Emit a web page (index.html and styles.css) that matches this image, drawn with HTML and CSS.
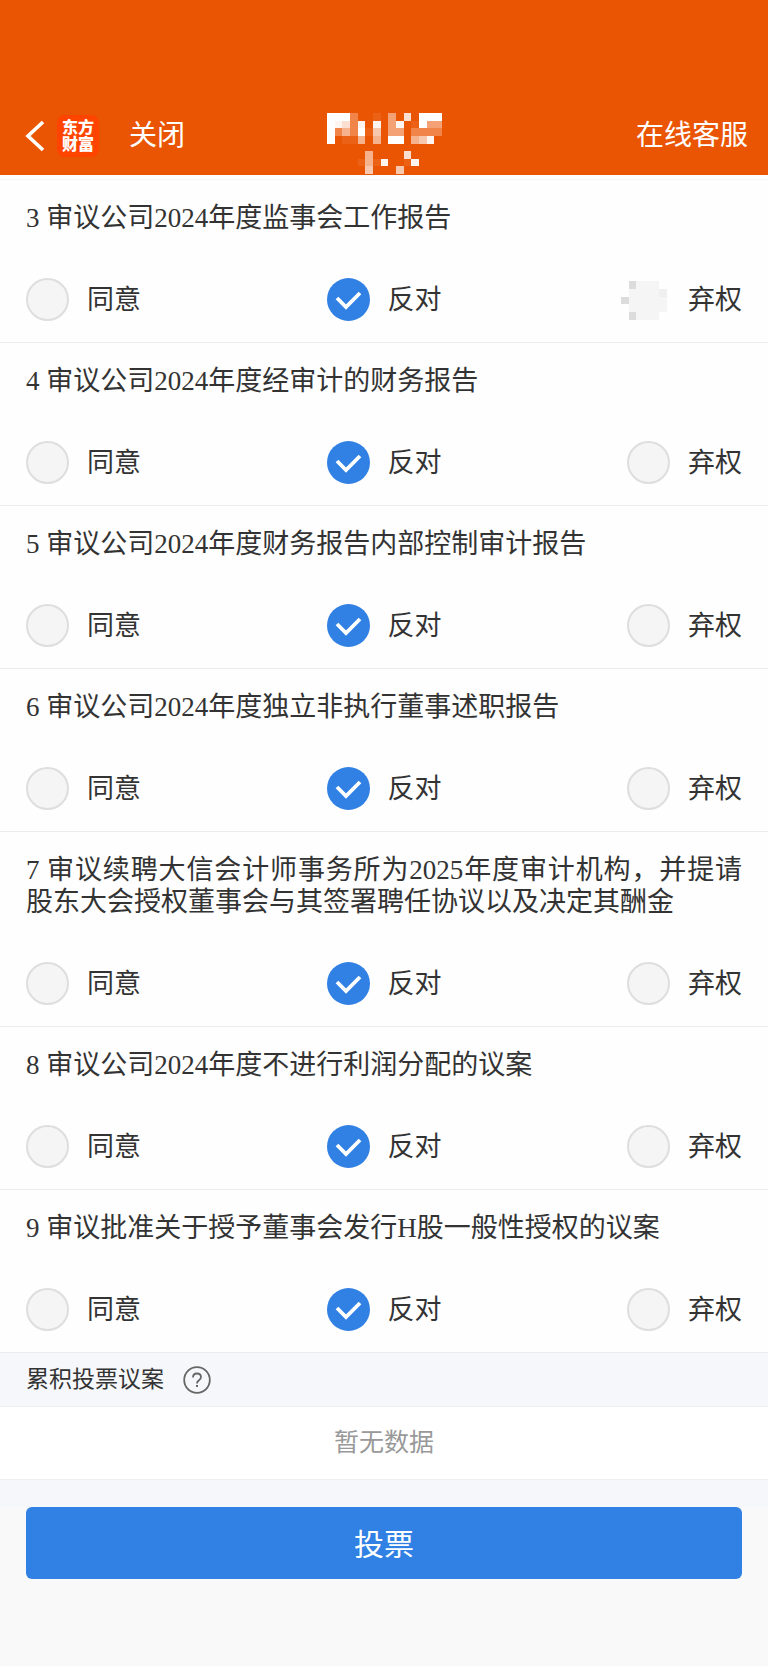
FILE: index.html
```html
<!DOCTYPE html>
<html lang="zh-CN">
<head>
    <meta charset="UTF-8">
    <meta name="viewport" content="width=device-width, initial-scale=1.0">
    <title>股东大会投票</title>
    <link rel="stylesheet" href="styles.css">
</head>
<body>

    <header class="topbar">
        <div class="topbar-left">
            <button class="back" type="button" aria-label="返回">
                <svg width="20" height="32" viewBox="0 0 20 32" fill="none" stroke="#fff" stroke-width="3.6"><path d="M18 2 3 16l15 14"/></svg>
            </button>
            <span class="logo">东方<br>财富</span>
            <a class="close" href="#">关闭</a>
        </div>

        <!-- Masked title -->
        <svg class="masked-title" width="115" height="61" viewBox="0 0 15 8" preserveAspectRatio="none" fill="#fff" shape-rendering="crispEdges" aria-hidden="true">
            <path d="M0 0h3v1H0zM0 1h1v3H0zM12 0h3v1h-3zM12 1h1v1h-1zM4 2h1v1H4zM8 3h2v1H8z"/>
            <path opacity=".94" d="M1 1h1v1H1zM4 1h1v1H4zM6 1h1v1H6zM9 1h1v1H9zM13 3h1v1h-1zM7 6h1v1H7zM11 6h1v1h-1z"/>
            <path opacity=".82" d="M10 0h1v1h-1zM2 1h1v1H2zM10 5h1v1h-1z"/>
            <path opacity=".68" d="M6 2h1v1H6zM12 3h1v1h-1zM5 7h1v1H5zM9 7h1v1H9z"/>
            <path opacity=".55" d="M2 2h1v1H2zM4 3h1v1H4zM6 3h1v1H6zM11 3h1v1h-1zM5 5h1v2H5z"/>
            <path opacity=".45" d="M8 0h1v3H8zM9 2h1v1H9zM13 1h2v1h-2z"/>
            <path opacity=".28" d="M3 0h1v3H3zM1 2h1v1H1zM11 2h4v1h-4z"/>
            <path opacity=".08" d="M6 0h1v1H6zM11 1h1v1h-1zM5 2h1v1H5zM2 3h2v1H2zM4 6h1v1H4zM6 6h1v1H6zM10 6h1v1h-1z"/>
        </svg>

        <a class="service" href="#">在线客服</a>
    </header>

    <form class="vote-form">
        <div class="proposals">
            <section class="proposal" role="radiogroup" aria-labelledby="t3">
                <h2 id="t3">3 审议公司2024年度监事会工作报告</h2>
                <div class="options">
                    <label><input type="radio" name="p3">同意</label>
                    <label><input type="radio" name="p3" checked>反对</label>
                    <label class="masked">
                        <input type="radio" name="p3">弃权
                        <svg width="46" height="39" viewBox="0 0 6 5" preserveAspectRatio="none" shape-rendering="crispEdges" aria-hidden="true">
                            <path fill="#f5f5f5" d="M1 0h4v1h1v3H5v1H1z"/>
                            <path fill="#efefef" d="M5 1h1v1H5z"/>
                            <path fill="#dcdcdc" d="M1 0h1v1H1zM0 2h1v1H0zM1 4h1v1H1z"/>
                        </svg>
                    </label>
                </div>
            </section>

            <section class="proposal" role="radiogroup" aria-labelledby="t4">
                <h2 id="t4">4 审议公司2024年度经审计的财务报告</h2>
                <div class="options">
                    <label><input type="radio" name="p4">同意</label>
                    <label><input type="radio" name="p4" checked>反对</label>
                    <label><input type="radio" name="p4">弃权</label>
                </div>
            </section>

            <section class="proposal" role="radiogroup" aria-labelledby="t5">
                <h2 id="t5">5 审议公司2024年度财务报告内部控制审计报告</h2>
                <div class="options">
                    <label><input type="radio" name="p5">同意</label>
                    <label><input type="radio" name="p5" checked>反对</label>
                    <label><input type="radio" name="p5">弃权</label>
                </div>
            </section>

            <section class="proposal" role="radiogroup" aria-labelledby="t6">
                <h2 id="t6">6 审议公司2024年度独立非执行董事述职报告</h2>
                <div class="options">
                    <label><input type="radio" name="p6">同意</label>
                    <label><input type="radio" name="p6" checked>反对</label>
                    <label><input type="radio" name="p6">弃权</label>
                </div>
            </section>

            <section class="proposal" role="radiogroup" aria-labelledby="t7">
                <h2 id="t7">7 审议续聘大信会计师事务所为2025年度审计机构，并提请股东大会授权董事会与其签署聘任协议以及决定其酬金</h2>
                <div class="options">
                    <label><input type="radio" name="p7">同意</label>
                    <label><input type="radio" name="p7" checked>反对</label>
                    <label><input type="radio" name="p7">弃权</label>
                </div>
            </section>

            <section class="proposal" role="radiogroup" aria-labelledby="t8">
                <h2 id="t8">8 审议公司2024年度不进行利润分配的议案</h2>
                <div class="options">
                    <label><input type="radio" name="p8">同意</label>
                    <label><input type="radio" name="p8" checked>反对</label>
                    <label><input type="radio" name="p8">弃权</label>
                </div>
            </section>

            <section class="proposal" role="radiogroup" aria-labelledby="t9">
                <h2 id="t9">9 审议批准关于授予董事会发行H股一般性授权的议案</h2>
                <div class="options">
                    <label><input type="radio" name="p9">同意</label>
                    <label><input type="radio" name="p9" checked>反对</label>
                    <label><input type="radio" name="p9">弃权</label>
                </div>
            </section>
        </div>

        <div class="group-title">
            <h2>累积投票议案</h2>
            <button class="help" type="button" aria-label="说明">
                <svg width="28" height="28" viewBox="0 0 28 28" fill="none" stroke="#666" stroke-width="1.8">
                    <circle cx="14" cy="14" r="12.8"/>
                    <path d="M10 11.500c0-2.600 1.700-4 4-4s4 1.400 4 3.600c0 1.600-.8 2.300-2 3.200-1.400 1-2 1.600-2 3.200"/>
                    <path stroke-width="2" d="M14 19v2"/>
                </svg>
            </button>
        </div>
        <p class="empty">暂无数据</p>
        <div class="spacer"></div>

        <div class="footer">
            <button class="submit" type="button">投票</button>
        </div>
    </form>

</body>
</html>
```
FILE: styles.css
```css
* {
    box-sizing: border-box;
}

body {
    margin: 0;
    min-height: 100vh;
    background-color: #f9f9f9;
    color: #333;
    font-family: "Liberation Serif", "Noto Sans CJK SC", sans-serif;
    font-size: 27px;
    line-height: 32px;
}

h2, p {
    margin: 0;
    font-weight: normal;
}

h2 {
    font-size: inherit;
}

button {
    padding: 0;
    border: none;
    background: none;
    font-family: inherit;
    cursor: pointer;
}

svg {
    display: block;
}

/* Top bar */
.topbar {
    display: grid;
    grid-template-columns: 1fr auto 1fr;
    align-items: start;
    padding: 113px 20px 1px;
    background-color: #ea5504;
    color: #fff;
    font-size: 28px;
    line-height: 46px;
}

.topbar a {
    color: inherit;
    text-decoration: none;
}

.topbar-left {
    display: flex;
    align-items: center;
    padding-left: 5px;
}

.logo {
    width: 42px;
    height: 42px;
    margin: 0 30px 0 12px;
    padding-top: 4px;
    border-radius: 8px;
    background-color: #ff4400;
    font-size: 16px;
    font-weight: 900;
    line-height: 17px;
    text-align: center;
}

.service {
    justify-self: end;
}

/* Proposals */
.proposals {
    padding-top: 4px;
    background-color: #fefefe;
}

.proposal {
    padding: 22px 26px 21px;
    border-bottom: 1px solid #ececec;
}

.proposal:first-child {
    border-top: 1px solid #f5f5f5;
}

.proposal h2 {
    text-align: justify;
}

.options {
    display: flex;
    justify-content: space-between;
    margin-top: 44px;
}

.options label {
    display: flex;
    align-items: center;
    gap: 18px;
    cursor: pointer;
}

.options input {
    appearance: none;
    width: 43px;
    height: 43px;
    margin: 0;
    border: 2px solid #dedede;
    border-radius: 50%;
    background-color: #f5f5f5;
}

.options input:checked {
    border: none;
    background: #3180e4 url("data:image/svg+xml,%3Csvg xmlns='http://www.w3.org/2000/svg' viewBox='0 0 43 43'%3E%3Cpath d='M10 20l9 9 14-14' fill='none' stroke='white' stroke-width='3.8'/%3E%3C/svg%3E") center / cover;
}

.options .masked {
    position: relative;
}

.masked input {
    opacity: 0;
}

.masked svg {
    position: absolute;
    top: 3px;
    left: -6px;
    pointer-events: none;
}

/* Cumulative voting */
.group-title {
    display: flex;
    align-items: center;
    gap: 19px;
    height: 54px;
    padding: 0 26px;
    border-bottom: 1px solid #eee;
    background-color: #f6f7fa;
    font-size: 23px;
}

.empty {
    padding: 20px;
    border-bottom: 1px solid #eee;
    background-color: #fff;
    color: #999;
    font-size: 25px;
    text-align: center;
}

.spacer {
    height: 27px;
    background-color: #f5f7fa;
}

.footer {
    padding: 0 26px 26px;
}

.submit {
    width: 100%;
    height: 72px;
    padding-bottom: 3px;
    border-radius: 6px;
    background-color: #3180e4;
    color: #fff;
    font-size: 30px;
}
```
